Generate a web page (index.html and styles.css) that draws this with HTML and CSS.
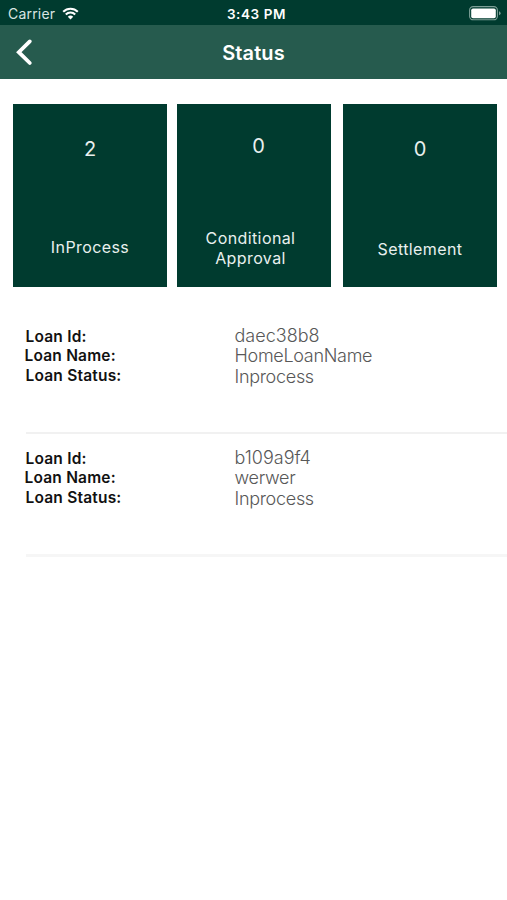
FILE: index.html
```html
<!DOCTYPE html>
<html>
<head>
  <meta charset="utf-8">
  <meta name="viewport" content="width=device-width">
  <title>Status</title>
  <link rel="stylesheet" href="styles.css">
</head>
<body>
  <div class="statusbar">
    <div class="carrier">
      <span>Carrier</span>
      <svg class="wifi" width="17" height="13" viewBox="0 0 17 13">
        <path d="M1.2 4.8a10.3 10.3 0 0 1 14.6 0M3.8 7.5a6.6 6.6 0 0 1 9.4 0" fill="none" stroke="#fff" stroke-width="2.1"/>
        <path d="M8.5 12.6L5.8 9.8a3.9 3.9 0 0 1 5.4 0z" fill="#fff"/>
      </svg>
    </div>
    <div class="time">3:43 PM</div>
    <svg class="battery" width="32" height="15" viewBox="0 0 32 15">
      <rect x="0.6" y="0.6" width="27.8" height="13.2" rx="3.6" fill="none" stroke="#7d9f97" stroke-width="1.1"/>
      <rect x="2.2" y="2.4" width="24.6" height="9.8" rx="1.8" fill="#fff"/>
      <path d="M30 5.2q1.6 0.6 1.6 2t-1.6 2z" fill="#7d9f97"/>
    </svg>
  </div>
  <div class="navbar">
    <svg class="back" width="18" height="28" viewBox="0 0 18 28">
      <path d="M14.8 3.4L3.8 14.2L14.8 25" fill="none" stroke="#fff" stroke-width="3.8" stroke-linecap="round"/>
    </svg>
    <h1>Status</h1>
  </div>
  <div class="cards">
    <div class="card inprocess">
      <div class="count">2</div>
      <div class="label">InProcess</div>
    </div>
    <div class="card approval">
      <div class="count">0</div>
      <div class="label">Conditional<br>Approval</div>
    </div>
    <div class="card settlement">
      <div class="count">0</div>
      <div class="label">Settlement</div>
    </div>
  </div>
  <div class="loans">
    <div class="loan">
      <div class="keys">
        <div>Loan Id:</div>
        <div class="name">Loan Name:</div>
        <div>Loan Status:</div>
      </div>
      <div class="values">
        <div class="id">daec38b8</div>
        <div>HomeLoanName</div>
        <div>Inprocess</div>
      </div>
    </div>
    <div class="loan">
      <div class="keys">
        <div>Loan Id:</div>
        <div class="name">Loan Name:</div>
        <div>Loan Status:</div>
      </div>
      <div class="values">
        <div class="id">b109a9f4</div>
        <div>werwer</div>
        <div>Inprocess</div>
      </div>
    </div>
  </div>
</body>
</html>
```
FILE: styles.css
```css
html, body {
  margin: 0;
  height: 100%;
}
body {
  background: #fff;
  font-family: Inter, "Liberation Sans", sans-serif;
  overflow: hidden;
}
.statusbar {
  display: grid;
  grid-template-columns: 1fr auto 1fr;
  align-items: center;
  box-sizing: border-box;
  height: 25px;
  padding: 2px 6px 0 8px;
  background: #003b2f;
  color: #fff;
  font-size: 14px;
}
.carrier {
  display: flex;
  align-items: center;
  gap: 7px;
  color: #d9e5e2;
  letter-spacing: 0.2px;
}
.time {
  padding-left: 4px;
  font-size: 13.5px;
  font-weight: 600;
  letter-spacing: 0.6px;
}
.battery {
  justify-self: end;
}
.navbar {
  display: grid;
  grid-template-columns: 1fr auto 1fr;
  align-items: center;
  box-sizing: border-box;
  height: 54px;
  padding: 0 15px;
  background: #265b4e;
  color: #fff;
}
h1 {
  margin: 0;
  padding-top: 1px;
  font-size: 20px;
  font-weight: 600;
  letter-spacing: 0.1px;
}
.cards {
  display: grid;
  grid-template-columns: 154px 154px 154px;
  column-gap: 10px;
  padding: 24.5px 0 0 13px;
}
.card {
  box-sizing: border-box;
  height: 183px;
  background: #003b2f;
  color: #e9f0ee;
  text-align: center;
}
.count {
  font-size: 20px;
  line-height: 24px;
}
.label {
  font-size: 16px;
  line-height: 20px;
  letter-spacing: 0.4px;
}
.inprocess {
  padding-top: 33px;
}
.inprocess .label {
  margin-top: 76px;
}
.approval {
  padding-top: 30px;
}
.approval .count {
  padding-left: 9px;
}
.approval .label {
  margin-top: 70px;
  padding-right: 7px;
}
.settlement {
  margin-left: 2px;
  width: 154px;
  padding-top: 33px;
}
.settlement .label {
  margin-top: 78px;
}
.loans {
  margin: 25px 0 0 26px;
}
.loan {
  display: grid;
  grid-template-columns: 208.5px 1fr;
  box-sizing: border-box;
  height: 122px;
  padding-top: 14px;
  border-bottom: 2px solid #f1f1f1;
}
.loan:last-child {
  height: 123px;
  border-bottom: 3px solid #f6f6f6;
}
.keys {
  margin-left: -0.5px;
  padding-top: 1px;
  color: #111;
  font-size: 15.5px;
  font-weight: 600;
  line-height: 19.6px;
  letter-spacing: 0.2px;
}
.name {
  margin-left: -1px;
}
.values {
  color: #585858;
  font-size: 18px;
  font-weight: 300;
  line-height: 20.5px;
  letter-spacing: -0.3px;
}
.id {
  letter-spacing: 0;
}
```
